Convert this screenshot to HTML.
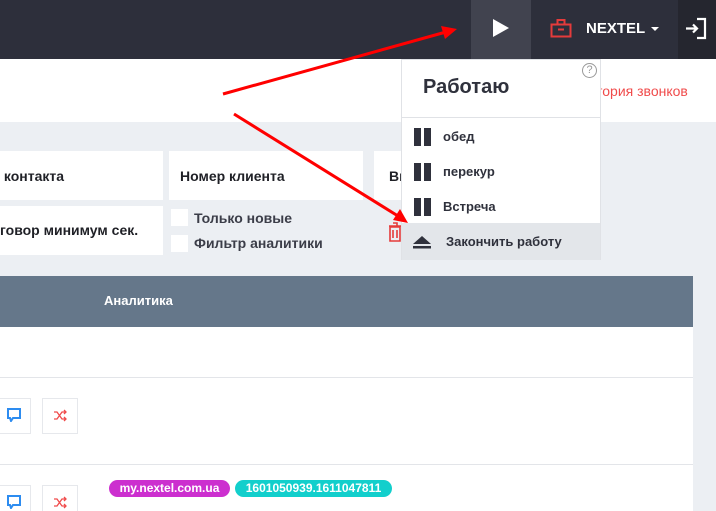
<!DOCTYPE html>
<html style="width:716px;height:511px;overflow:hidden"><head><meta charset="utf-8"><style>
*{margin:0;padding:0;box-sizing:border-box}
body{width:716px;height:511px;overflow:hidden;position:relative;background:#eceff3;font-family:"Liberation Sans",sans-serif}
.a{position:absolute}
.card{position:absolute;background:#fff;font-size:14px;font-weight:bold;color:#1f2026;padding-top:17px}
.cb{position:absolute;width:17px;height:17px;background:#fff}
.lbl{position:absolute;font-size:14px;color:#3b3d48;font-weight:bold}
.ib{position:absolute;width:36px;height:36px;border:1px solid #e6e8ec;background:#fff}
.it{position:absolute;left:0;width:198px;height:35px;font-size:13px;font-weight:bold;color:#2f313c}
.pz{position:absolute;left:12px;top:10px;width:18px;height:18px}
.pz:before,.pz:after{content:"";position:absolute;top:0;width:7px;height:18px;background:#2f313c}
.pz:before{left:0}.pz:after{left:10px}
</style></head><body>
<div class="a" style="left:0;top:0;width:716px;height:59px;background:#2d2f3b"></div>
<div class="a" style="left:471px;top:0;width:60px;height:59px;background:#41434f"></div>
<div class="a" style="left:678px;top:0;width:38px;height:59px;background:#25262f"></div>
<div class="a" style="left:493px;top:19px;width:0;height:0;border-left:16px solid #fff;border-top:9px solid transparent;border-bottom:9px solid transparent"></div>
<svg class="a" style="left:550px;top:18px" width="22" height="20"><rect x="1.5" y="6.5" width="19" height="12" fill="none" stroke="#e53b3b" stroke-width="2"/><rect x="7.5" y="2" width="7" height="4.5" fill="none" stroke="#e53b3b" stroke-width="2"/><line x1="8" y1="11.5" x2="14" y2="11.5" stroke="#e53b3b" stroke-width="2"/></svg>
<div class="a" style="left:586px;top:20px;color:#fff;font-weight:bold;font-size:15px">NEXTEL</div>
<div class="a" style="left:651px;top:27px;border-top:4px solid #fff;border-left:4px solid transparent;border-right:4px solid transparent"></div>
<svg class="a" style="left:685px;top:17px" width="24" height="24"><path d="M12 2h8v19h-8" fill="none" stroke="#fff" stroke-width="2.2"/><path d="M1 11.5h11M8 7.5l4 4-4 4" fill="none" stroke="#fff" stroke-width="2.2"/></svg>
<div class="a" style="left:0;top:59px;width:716px;height:63px;background:#fff"></div>
<div class="a" style="left:596px;top:83px;font-size:14px;color:#f04b4b">тория звонков</div>
<div class="card" style="left:0;top:151px;width:163px;height:49px">&nbsp;контакта</div>
<div class="card" style="left:169px;top:151px;width:194px;height:49px;padding-left:11px">Номер клиента</div>
<div class="card" style="left:374px;top:151px;width:40px;height:49px;padding-left:15px">Вı</div>
<div class="card" style="left:0;top:206px;width:163px;height:49px;padding-top:16px">говор минимум сек.</div>
<div class="cb" style="left:171px;top:209px"></div>
<div class="cb" style="left:171px;top:235px"></div>
<div class="lbl" style="left:194px;top:210px">Только новые</div>
<div class="lbl" style="left:194px;top:235px">Фильтр аналитики</div>
<svg class="a" style="left:389px;top:222px" width="12" height="20"><path d="M1 5h10v14H1zM0 4h12M4 1h4v3M4 8v8M8 8v8" fill="none" stroke="#e53b3b" stroke-width="1.6"/></svg>
<div class="a" style="left:0;top:276px;width:693px;height:51px;background:#65778a"></div>
<div class="a" style="left:104px;top:293px;color:#fff;font-weight:bold;font-size:13px">Аналитика</div>
<div class="a" style="left:0;top:327px;width:693px;height:184px;background:#fff"></div>
<div class="a" style="left:0;top:377px;width:693px;height:1px;background:#e3e5e9"></div>
<div class="a" style="left:0;top:464px;width:693px;height:1px;background:#e3e5e9"></div>
<div class="ib" style="left:-5px;top:398px"></div><div class="ib" style="left:42px;top:398px"></div>
<div class="ib" style="left:-5px;top:485px"></div><div class="ib" style="left:42px;top:485px"></div>
<svg class="a" style="left:7px;top:408px" width="14" height="14"><path d="M1 1h12v9H6l-2 3-1-3H1z" fill="none" stroke="#2d8cf0" stroke-width="2"/></svg>
<svg class="a" style="left:7px;top:495px" width="14" height="14"><path d="M1 1h12v9H6l-2 3-1-3H1z" fill="none" stroke="#2d8cf0" stroke-width="2"/></svg>
<svg class="a" style="left:53px;top:409px" width="14" height="13"><path d="M1 3h3l5 7h4M1 10h3l5-7h4M11 1l2 2-2 2M11 8l2 2-2 2" fill="none" stroke="#f04b4b" stroke-width="1.3"/></svg>
<svg class="a" style="left:53px;top:496px" width="14" height="13"><path d="M1 3h3l5 7h4M1 10h3l5-7h4M11 1l2 2-2 2M11 8l2 2-2 2" fill="none" stroke="#f04b4b" stroke-width="1.3"/></svg>
<div class="a" style="left:109px;top:480px;width:121px;height:17px;border-radius:9px;background:#cc2fcf;color:#fff;font-size:12px;font-weight:bold;text-align:center;line-height:17px">my.nextel.com.ua</div>
<div class="a" style="left:235px;top:480px;width:157px;height:17px;border-radius:9px;background:#12cfcc;color:#fff;font-size:12px;font-weight:bold;text-align:center;line-height:17px">1601050939.1611047811</div>
<div class="a" style="left:401px;top:59px;width:200px;height:201px;background:#fff;border:1px solid #e0e2e6">
 <div class="a" style="left:180px;top:3px;width:15px;height:15px;border:1.5px solid #999;border-radius:50%;color:#999;font-size:11px;text-align:center;line-height:12px">?</div>
 <div class="a" style="left:21px;top:16px;font-size:20px;font-weight:bold;color:#2f313c">Работаю</div>
 <div class="a" style="left:0;top:57px;width:198px;height:1px;background:#e0e2e6"></div>
 <div class="it" style="top:58px"><div class="pz"></div><span class="a" style="left:41px;top:11px">обед</span></div>
 <div class="it" style="top:93px"><div class="pz"></div><span class="a" style="left:41px;top:11px">перекур</span></div>
 <div class="it" style="top:128px"><div class="pz"></div><span class="a" style="left:41px;top:11px">Встреча</span></div>
 <div class="it" style="top:163px;height:37px;background:#e3e6ea"><svg class="a" style="left:11px;top:13px" width="18" height="13"><path d="M9 0l9 8H0z" fill="#2f313c"/><rect y="10" width="18" height="2.5" fill="#2f313c"/></svg><span class="a" style="left:44px;top:11px">Закончить работу</span></div>
</div>
<svg class="a" style="left:0;top:0" width="716" height="511"><path d="M223 94L446 32" stroke="#f00" stroke-width="3"/><path d="M457 29l-16-3 4 13z" fill="#f00"/><path d="M234 114L398 216" stroke="#f00" stroke-width="3"/><path d="M408 223l-8-14-7 11z" fill="#f00"/></svg>
</body></html>
